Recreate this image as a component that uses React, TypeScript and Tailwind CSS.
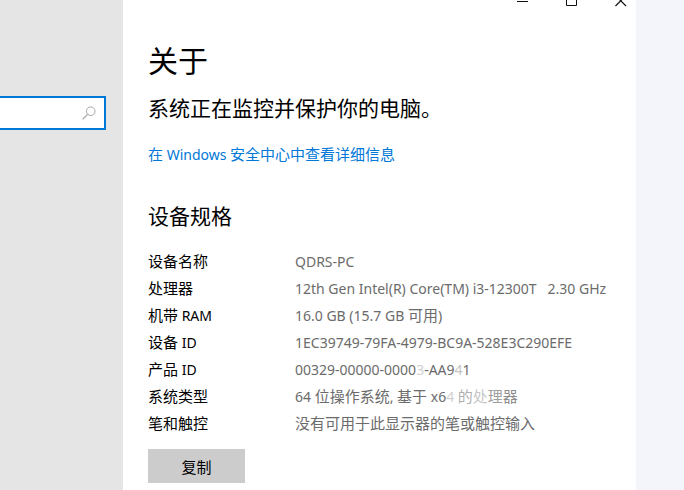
import type { ReactNode } from "react";

type Spec = {
    label: ReactNode;
    value: ReactNode;
};

const Latin = ({ children }: { children: ReactNode }) => (
    <span className="font-['Noto_Sans','Open_Sans',sans-serif] text-sm leading-none">{children}</span>
);

const specs: Spec[] = [
    { label: "设备名称", value: <Latin>QDRS-PC</Latin> },
    {
        label: "处理器",
        value: <Latin>12th Gen Intel(R) Core(TM) i3-12300T&nbsp;&nbsp; 2.30 GHz</Latin>,
    },
    {
        label: <>机带<Latin> RAM</Latin></>,
        value: <><Latin>16.0 GB (15.7 GB </Latin>可用<Latin>)</Latin></>,
    },
    {
        label: <>设备<Latin> ID</Latin></>,
        value: <Latin>1EC39749-79FA-4979-BC9A-528E3C290EFE</Latin>,
    },
    {
        label: <>产品<Latin> ID</Latin></>,
        value: (
            <Latin>
                00329-00000-0000<span className="text-[#d0d0d0]">3</span>-AA9
                <span className="text-[#c4c4c4]">4</span>1
            </Latin>
        ),
    },
    {
        label: "系统类型",
        value: (
            <>
                <Latin>64 </Latin>位操作系统<Latin>, </Latin>基于<Latin> x6</Latin>
                <span className="text-[#d0d0d0]"><Latin>4 </Latin></span>
                <span className="text-[#b0b0b0]">的</span>
                <span className="text-[#c8c8c8]">处</span>
                <span className="text-[#a0a0a0]">理</span>
                <span className="text-[#8c8c8c]">器</span>
            </>
        ),
    },
    { label: "笔和触控", value: "没有可用于此显示器的笔或触控输入" },
];

const WindowControls = () => (
    <div className="flex justify-end gap-[37px] pr-[9px]">
        <button type="button" aria-label="最小化" className="h-2 w-3">
            <svg viewBox="0 0 12 8" className="h-2 w-3" fill="none" stroke="#111">
                <path d="M0 1.5h11" />
            </svg>
        </button>
        <button type="button" aria-label="最大化" className="h-2 w-3">
            <svg viewBox="0 0 12 8" className="h-2 w-3" fill="none" stroke="#111">
                <path d="M.5-4.5h10v10H.5z" />
            </svg>
        </button>
        <button type="button" aria-label="关闭" className="h-2 w-3">
            <svg viewBox="0 0 12 8" className="h-2 w-3" fill="none" stroke="#111" strokeWidth="1.2">
                <path d="M.5-4.5l10.5 10.5M11-4.5L.5 6" />
            </svg>
        </button>
    </div>
);

const Sidebar = () => (
    <aside className="w-[123px] shrink-0 bg-[#e5e5e5] pt-24">
        <label className="mr-[17px] flex h-[34px] items-center border-2 border-l-0 border-[#0078d7] bg-white pr-2">
            <input
                type="search"
                aria-label="查找设置"
                className="w-full min-w-0 flex-1 bg-transparent text-sm outline-none"
            />
            <svg viewBox="0 0 14 14" className="size-[14px] shrink-0" fill="none" stroke="#a8a8a8">
                <circle cx="8.7" cy="5.2" r="4.3" />
                <path d="M5.6 8.4L.7 13.3" strokeWidth="1.3" />
            </svg>
        </label>
    </aside>
);

const App = () => {
    return (
        <div className="flex min-h-screen w-full overflow-hidden bg-[#f3f5fa] font-['Noto_Sans_CJK_SC',sans-serif] text-[15px] text-black">
            <Sidebar />
            <main className="min-w-0 flex-1 bg-white">
                <WindowControls />
                <div className="pl-[25px] pt-[29px]">
                    <h1 className="text-[30px] leading-[44px]">关于</h1>
                    <p className="mt-2 text-[21px] leading-9">系统正在监控并保护你的电脑。</p>
                    <a href="#security" className="mt-[18px] block leading-[22px] text-[#0078d7]">
                        在<Latin> Windows </Latin>安全中心中查看详细信息
                    </a>

                    <h2 className="mt-8 text-[21px] leading-9">设备规格</h2>
                    <table className="mt-[14px] border-collapse text-left">
                        <tbody>
                            {specs.map((spec, idx) => (
                                <tr key={idx} className="h-[27px] leading-[27px]">
                                    <th scope="row" className="w-[147px] p-0 font-normal">
                                        {spec.label}
                                    </th>
                                    <td className="whitespace-nowrap p-0 text-[#6b6b6b]">{spec.value}</td>
                                </tr>
                            ))}
                        </tbody>
                    </table>

                    <button type="button" className="mt-[13px] h-[34px] w-[97px] bg-[#cccccc] leading-none">
                        复制
                    </button>
                </div>
            </main>
            <div className="w-12 shrink-0" />
        </div>
    );
};

export default App;
